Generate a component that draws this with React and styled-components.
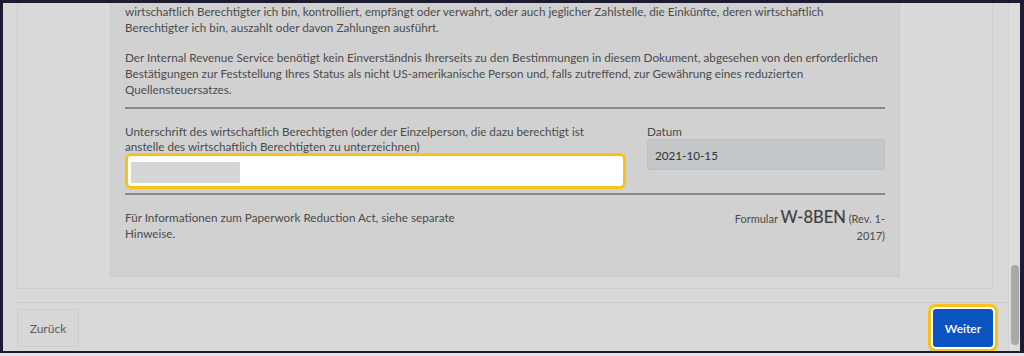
import React from 'react';
import styled, { createGlobalStyle } from 'styled-components';

const GlobalStyle = createGlobalStyle`
  html, body {
    margin: 0;
    padding: 0;
    background: #e4e4e4;
  }
  body {
    font-family: Lato, "Open Sans", sans-serif;
    color: #4b4b4b;
  }
`;

const App = () => {
  return (
    <>
      <GlobalStyle />
      <FrameDiv>
        <ScrollDiv>
          <ContentDiv>
            <CardDiv>
              <FormPanel>
                <Paragraph>
                  wirtschaftlich Berechtigter ich bin, kontrolliert, empfängt oder verwahrt, oder auch jeglicher Zahlstelle, die Einkünfte, deren wirtschaftlich
                  <br />
                  Berechtigter ich bin, auszahlt oder davon Zahlungen ausführt.
                </Paragraph>
                <Paragraph>
                  Der Internal Revenue Service benötigt kein Einverständnis Ihrerseits zu den Bestimmungen in diesem Dokument, abgesehen von den erforderlichen
                  <br />
                  Bestätigungen zur Feststellung Ihres Status als nicht US-amerikanische Person und, falls zutreffend, zur Gewährung eines reduzierten
                  <br />
                  Quellensteuersatzes.
                </Paragraph>
                <Rule />
                <SignRow>
                  <FieldCol>
                    <FieldLabel>
                      Unterschrift des wirtschaftlich Berechtigten (oder der Einzelperson, die dazu berechtigt ist
                      <br />
                      anstelle des wirtschaftlich Berechtigten zu unterzeichnen)
                    </FieldLabel>
                    <SignInput>
                      <Redacted />
                    </SignInput>
                  </FieldCol>
                  <DateCol>
                    <FieldLabel>Datum</FieldLabel>
                    <DateBox>2021-10-15</DateBox>
                  </DateCol>
                </SignRow>
                <Rule />
                <FootRow>
                  <FootNote>
                    Für Informationen zum Paperwork Reduction Act, siehe separate
                    <br />
                    Hinweise.
                  </FootNote>
                  <FormName>
                    Formular <strong>W-8BEN</strong> (Rev. 1-
                    <br />
                    2017)
                  </FormName>
                </FootRow>
              </FormPanel>
            </CardDiv>
            <FooterDiv>
              <BackButton>Zurück</BackButton>
              <NextButton>Weiter</NextButton>
            </FooterDiv>
          </ContentDiv>
          <TrackDiv>
            <ThumbDiv />
          </TrackDiv>
        </ScrollDiv>
      </FrameDiv>
    </>
  );
};

export default App;

const FrameDiv = styled.div`
  height: 353px;
  box-sizing: border-box;
  border-style: solid;
  border-color: #1b1b33;
  border-width: 3px 4px 2px 3px;
  background: #d9d9d9;
  overflow: hidden;
`;

const ScrollDiv = styled.div`
  height: 100%;
  display: flex;
`;

const ContentDiv = styled.div`
  flex: 1;
  min-width: 0;
  display: flex;
  flex-direction: column;
`;

const CardDiv = styled.div`
  margin: 0 15px 0 14px;
  padding: 0 92px 11px;
  border: 1px solid #cdcdcd;
  border-top: none;
`;

const FormPanel = styled.div`
  background: #d1d1d1;
  border: 1px solid #cacaca;
  border-top: none;
  padding: 0 14px 32px;
  font-size: 11.7px;
`;

const Paragraph = styled.p`
  margin: 0 0 14px;
  line-height: 16px;
  white-space: nowrap;
`;

const Rule = styled.hr`
  margin: -4px 0 0;
  border: none;
  border-top: 2px solid #8a8a8a;
`;

const SignRow = styled.div`
  display: flex;
  gap: 21px;
  padding: 15px 0 8px;
`;

const FieldCol = styled.div`
  width: 501px;
  display: flex;
  flex-direction: column;
`;

const DateCol = styled.div`
  flex: 1;
  display: flex;
  flex-direction: column;
`;

const FieldLabel = styled.div`
  line-height: 15px;
  white-space: nowrap;
`;

const SignInput = styled.div`
  height: 36px;
  box-sizing: border-box;
  border: 3px solid #f6c21b;
  border-radius: 6px;
  background: #ffffff;
  padding: 6px 0 0 3px;
  margin-top: -1px;
`;

const Redacted = styled.div`
  width: 109px;
  height: 21px;
  background: #d6d6d6;
`;

const DateBox = styled.div`
  height: 31px;
  box-sizing: border-box;
  border: 1px solid #bdc0c3;
  border-radius: 3px;
  background: #c4c7ca;
  padding: 0 7px;
  display: flex;
  align-items: center;
  color: #333333;
`;

const FootRow = styled.div`
  display: flex;
  justify-content: space-between;
  align-items: flex-start;
  padding-top: 14px;
`;

const FootNote = styled.div`
  line-height: 16px;
  white-space: nowrap;
`;

const FormName = styled.div`
  text-align: right;
  line-height: 17px;
  font-size: 11px;
  white-space: nowrap;
  & strong {
    font-size: 16.5px;
    font-weight: 400;
    color: #3f3f3f;
    -webkit-text-stroke: 0.2px #3f3f3f;
  }
`;

const FooterDiv = styled.div`
  margin: 13px 0 0 14px;
  border-top: 1px solid #c9c9c9;
  display: flex;
  justify-content: space-between;
  align-items: center;
  padding: 6px 15px 0 0;
`;

const BackButton = styled.button`
  width: 62px;
  height: 38px;
  border: 1px solid #cbcbcb;
  border-radius: 3px;
  background: #d7d7d7;
  color: #5e5e5e;
  font-family: Lato, sans-serif;
  font-size: 12px;
`;

const NextButton = styled.button`
  width: 60px;
  height: 38px;
  border: none;
  border-radius: 3px;
  background: #0b54bf;
  color: #ffffff;
  font-family: Lato, sans-serif;
  font-size: 12px;
  font-weight: 600;
  box-shadow: 0 0 0 2px #ffffff, 0 0 0 5px #f6c21b;
`;

const TrackDiv = styled.div`
  width: 12px;
  background: #dcdcdc;
  border-left: 1px solid #d2d2d2;
  display: flex;
  flex-direction: column;
  justify-content: flex-end;
  padding: 0 0 6px 2px;
  box-sizing: border-box;
`;

const ThumbDiv = styled.div`
  width: 8px;
  height: 80px;
  border-radius: 4px;
  background: #a8a8a8;
`;
